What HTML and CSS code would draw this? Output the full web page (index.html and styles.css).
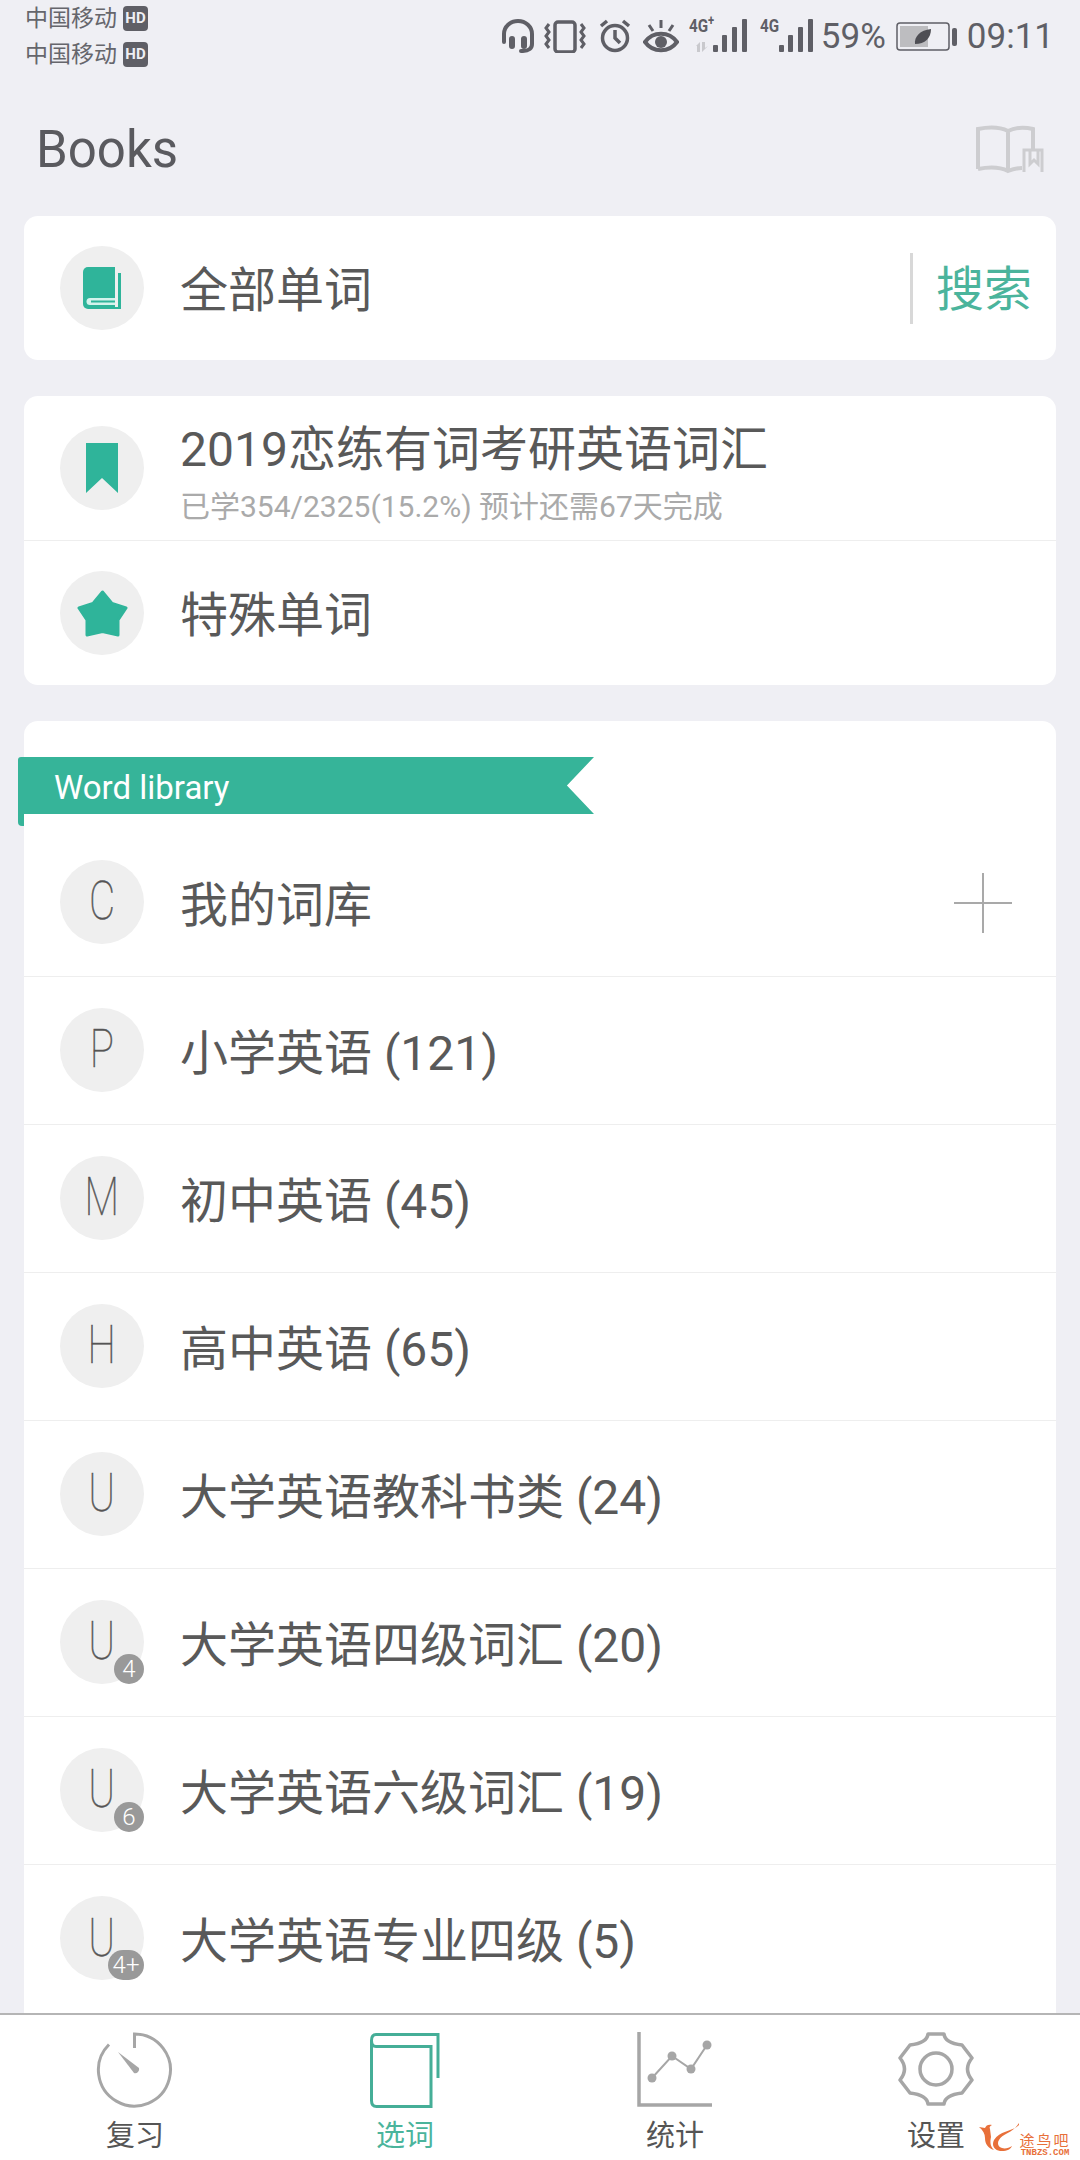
FILE: index.html
```html
<!DOCTYPE html>
<html lang="en">
<head>
  <meta charset="UTF-8">
  <title>Books</title>
  <link rel="stylesheet" href="styles.css">
</head>
<body>
  <div class="phone">
    <div class="statusbar">
      <div class="carriers">
        <div class="carrier">中国移动<span class="hd">HD</span></div>
        <div class="carrier">中国移动<span class="hd">HD</span></div>
      </div>
      <div class="status-right">
        <svg class="st st-head" width="34" height="34" viewBox="0 0 34 34" fill="none" stroke="#5f5f66" stroke-width="4" stroke-linecap="round"><path d="M3 23V15a14 13 0 0 1 28 0v10c0 4-3 7-9 7h-2"/><path d="M11 20v7M23 20v7" stroke-width="6"/></svg>
        <svg class="st st-vib" width="42" height="34" viewBox="0 0 42 34" fill="none" stroke="#5f5f66" stroke-width="3.500"><rect x="11" y="3" width="20" height="30" rx="3"/><path d="M5 5l-3 4 3 4-3 4 3 4-3 4 3 4M37 5l3 4-3 4 3 4-3 4 3 4-3 4" stroke-width="3"/></svg>
        <svg class="st" width="32" height="34" viewBox="0 0 32 34" fill="none" stroke="#5f5f66" stroke-width="3.500"><circle cx="16" cy="19" r="12.500"/><path d="M16 11v8l5 5M2 7l6-5M30 7l-6-5"/></svg>
        <svg class="st st-eye" width="36" height="34" viewBox="0 0 36 34" fill="none" stroke="#5f5f66" stroke-width="4"><path d="M2 23c8-11 24-11 32 0-8 11-24 11-32 0z"/><circle cx="18" cy="23" r="6" fill="#5f5f66" stroke="none"/><path d="M18 1v8M6 6l4 6M30 6l-4 6" stroke-width="3"/></svg>
        <div class="signal sig-a">
          <span class="sig-label">4G<sup>+</sup></span>
          <svg width="60" height="34" viewBox="0 0 60 34" fill="#5f5f66"><path d="M7 27l4-4v10H8v-6zM13 33V23h3v6l3-2z" fill="#c9c9cd"/><rect x="24" y="26" width="5" height="7" rx="1"/><rect x="33" y="16" width="5" height="17" rx="1"/><rect x="43" y="8" width="5" height="25" rx="1"/><rect x="53" y="0" width="5" height="33" rx="1"/></svg>
        </div>
        <div class="signal sig-b">
          <span class="sig-label">4G</span>
          <svg width="53" height="34" viewBox="0 0 53 34" fill="#5f5f66"><rect x="19" y="26" width="5" height="7" rx="1"/><rect x="28" y="16" width="5" height="17" rx="1"/><rect x="38" y="8" width="5" height="25" rx="1"/><rect x="48" y="0" width="5" height="33" rx="1"/></svg>
        </div>
        <span class="pct">59%</span>
        <svg class="batt" width="61" height="32" viewBox="0 0 61 32" fill="none"><rect x="1" y="2" width="52" height="27" rx="3" stroke="#5f5f66" stroke-width="1.500"/><rect x="4" y="5" width="28" height="21" fill="#bdbdc0"/><path d="M19 23c-1-7 5-14 16-15 0 9-6 15-16 15z" fill="#4e4e54"/><rect x="56" y="7" width="5" height="18" rx="2" fill="#5f5f66"/></svg>
        <span class="time">09:11</span>
      </div>
    </div>

    <div class="header">
      <h1 class="title">Books</h1>
      <svg class="shelf" width="68" height="50" viewBox="0 0 68 50" fill="none" stroke="#cdcdd0" stroke-width="4"><path d="M2 44V4c10-2 22-2 30 2 8-4 17-4 25-2v20M2 44c10-2 22-2 30 2 5-2 10-3 14-3M32 6v40"/><path d="M48 47V25h18v22M54 25v14l4-4 4 4V25" stroke-width="3"/></svg>
    </div>

    <div class="content">
      <div class="card">
        <div class="row row-top">
          <div class="badge-wrap">
            <svg width="38" height="42" viewBox="0 0 38 42"><path d="M5 0h27v42H5a5 5 0 0 1-5-5V5a5 5 0 0 1 5-5z" fill="#2fb49a"/><path d="M7 31h25v7H7a3.500 3.500 0 0 1 0-7z" fill="#d4f3ec"/><rect x="8" y="33.500" width="24" height="2" fill="#2fb49a"/><path d="M35 6h3v36h-6v-2h3z" fill="#2fb49a"/></svg>
          </div>
          <div class="label">全部单词</div>
          <div class="search">搜索</div>
        </div>
      </div>

      <div class="card">
        <div class="row row-book">
          <div class="badge-wrap">
            <svg width="32" height="50" viewBox="0 0 32 50"><path d="M0 0h32v50L16 35 0 50z" fill="#2fb49a"/></svg>
          </div>
          <div class="label-stack">
            <div class="label">2019恋练有词考研英语词汇</div>
            <div class="sub">已学354/2325(15.2%) 预计还需67天完成</div>
          </div>
        </div>
        <div class="row row-star">
          <div class="badge-wrap">
            <svg width="51" height="47" viewBox="0 0 51 47"><path d="M25.500 2L35 13.500 49 18 41 30V45L25.500 41.500 10 45V30L2 18 16 13.500z" fill="#2fb49a" stroke="#2fb49a" stroke-width="3" stroke-linejoin="round"/></svg>
          </div>
          <div class="label">特殊单词</div>
        </div>
      </div>

      <div class="card card-lib">
        <div class="lib-head">
          <div class="ribbon">Word library</div>
        </div>
        <div class="row">
          <div class="badge-wrap"><span class="letter">C</span></div>
          <div class="label">我的词库</div>
          <svg class="plus" width="58" height="60" viewBox="0 0 58 60" stroke="#a9a9a9" stroke-width="2"><path d="M29 0v60M0 30h58"/></svg>
        </div>
        <div class="row">
          <div class="badge-wrap"><span class="letter">P</span></div>
          <div class="label">小学英语 (121)</div>
        </div>
        <div class="row">
          <div class="badge-wrap"><span class="letter">M</span></div>
          <div class="label">初中英语 (45)</div>
        </div>
        <div class="row">
          <div class="badge-wrap"><span class="letter">H</span></div>
          <div class="label">高中英语 (65)</div>
        </div>
        <div class="row">
          <div class="badge-wrap"><span class="letter">U</span></div>
          <div class="label">大学英语教科书类 (24)</div>
        </div>
        <div class="row">
          <div class="badge-wrap"><span class="letter">U</span><span class="level">4</span></div>
          <div class="label">大学英语四级词汇 (20)</div>
        </div>
        <div class="row">
          <div class="badge-wrap"><span class="letter">U</span><span class="level">6</span></div>
          <div class="label">大学英语六级词汇 (19)</div>
        </div>
        <div class="row">
          <div class="badge-wrap"><span class="letter">U</span><span class="level wide">4+</span></div>
          <div class="label">大学英语专业四级 (5)</div>
        </div>
      </div>
    </div>

    <div class="tabbar">
      <div class="tab">
        <svg width="78" height="78" viewBox="0 0 78 78" fill="none" stroke="#a6a6a6" stroke-width="3"><path d="M38.500 16V2A36 36 0 1 1 13 12.500"/><path d="M22 20L43 36a4 4 0 0 1-5 5z" fill="#a6a6a6" stroke="none"/></svg>
        <span>复习</span>
      </div>
      <div class="tab active">
        <svg width="72" height="78" viewBox="0 0 72 78" fill="none" stroke="#45ae97" stroke-width="3"><path d="M69 46V2.500H7C4 2.500 2.500 5 2.500 8.500v60c0 4 2 6 5 6H62V14.500H7C4 14.500 2.500 12 2.500 8.500"/></svg>
        <span>选词</span>
      </div>
      <div class="tab">
        <svg width="78" height="78" viewBox="0 0 78 78" fill="none" stroke="#a6a6a6"><path d="M3 0v73h73" stroke-width="3.500"/><path d="M16 46L36 24L55 37L71 13" stroke-width="2"/><g fill="#a6a6a6" stroke="none"><circle cx="16" cy="46" r="4.500"/><circle cx="36" cy="24" r="4.500"/><circle cx="55" cy="37" r="4.500"/><circle cx="71" cy="13" r="4.500"/></g></svg>
        <span>统计</span>
      </div>
      <div class="tab">
        <svg width="76" height="78" viewBox="0 0 76 78" fill="none" stroke="#a6a6a6" stroke-width="3.500" stroke-linejoin="round"><path d="M30 2H46Q47 11 64 13L74 26Q65 37 74 48L64 61Q47 63 46 72H30Q29 63 12 61L2 48Q11 37 2 26L12 13Q29 11 30 2Z"/><circle cx="38" cy="37" r="16"/></svg>
        <span>设置</span>
      </div>
    </div>

    <div class="watermark">
      <svg class="wm-logo" width="42" height="30" viewBox="0 0 42 30" fill="#e8703a"><path d="M41 2C34 9 22 7 16 17c-3 6 1 11 8 11 5 0 9-2 10-5-3 2-7 3-10 2-4-1-5-5-3-8 3-6 14-7 20-17z"/><path d="M1 4l6 1c1-3 4-4 7-3-2 1-3 2-2 4l1 8c-1 5-1 9 3 13-6-2-9-6-9-12 0-4-2-8-6-11z"/></svg>
      <div class="wm-text">
        <span class="wm-cn">途鸟吧</span>
        <span class="wm-en">TNBZS.COM</span>
      </div>
    </div>
  </div>
</body>
</html>
```

FILE: styles.css
```css
* {
  box-sizing: border-box;
}

body {
  margin: 0;
  background: #efeff4;
  font-family: Roboto, "Noto Sans CJK SC", sans-serif;
  color: #555;
}

.phone {
  position: relative;
  width: 1080px;
  height: 2160px;
  display: flex;
  flex-direction: column;
  overflow: hidden;
  background: #efeff4;
}

/* status bar */
.statusbar {
  height: 72px;
  padding: 0 26px 0 25px;
  display: flex;
  justify-content: space-between;
}

.carrier {
  height: 36px;
  display: flex;
  align-items: center;
  font-size: 23px;
  color: #66666c;
  line-height: 25px;
}

.hd {
  width: 25px;
  height: 25px;
  margin-left: 6px;
  border-radius: 4px;
  background: #5f5f66;
  color: #efeff4;
  font-size: 15px;
  font-weight: 700;
  text-align: center;
}

.status-right {
  padding-top: 19px;
  display: flex;
  align-items: flex-start;
  color: #5f5f66;
}

.st {
  margin-right: 12px;
}

.st-head {
  margin-right: 9px;
}

.st-vib {
  margin-right: 13px;
}

.st-eye {
  margin-right: 10px;
}

.signal {
  position: relative;
}

.sig-a {
  width: 60px;
  margin-right: 11px;
}

.sig-b {
  width: 53px;
  margin-right: 8px;
}

.sig-label {
  position: absolute;
  left: 0;
  top: -2px;
  font-size: 19px;
  font-weight: 700;
  line-height: 18px;
  white-space: nowrap;
  transform: scaleX(0.8);
  transform-origin: left top;
}

.sig-label sup {
  font-size: 14px;
  line-height: 0;
}

.pct {
  margin: -2px 10px 0 0;
  font-size: 35px;
  line-height: 40px;
}

.batt {
  margin: 2px 10px 0 0;
}

.time {
  margin-top: -2px;
  font-size: 35px;
  line-height: 40px;
}

/* title row */
.header {
  height: 144px;
  padding: 0 36px 0 36px;
  display: flex;
  justify-content: space-between;
  align-items: flex-start;
}

.title {
  margin: 48px 0 0;
  font-size: 51px;
  font-weight: 400;
  line-height: 60px;
  color: #5a5a5f;
}

.shelf {
  margin-top: 53px;
}

/* cards */
.content {
  flex: 1;
  min-height: 0;
  padding: 0 24px;
  overflow: hidden;
}

.card {
  background: #fff;
  border-radius: 14px;
  margin-bottom: 36px;
}

.row {
  height: 148px;
  padding: 0 32px 0 36px;
  display: flex;
  align-items: center;
  border-bottom: 1px solid #eeeeee;
}

.row:last-child {
  border-bottom: none;
}

.row-top {
  height: 144px;
}

.row-book {
  height: 145px;
}

.row-star {
  height: 144px;
}

.badge-wrap {
  position: relative;
  flex: none;
  width: 84px;
  height: 84px;
  margin-right: 36px;
  border-radius: 50%;
  background: #efefef;
  display: flex;
  align-items: center;
  justify-content: center;
}

.card-lib .badge-wrap {
  margin-top: -2px;
}

.label {
  flex: 1;
  padding-top: 6px;
  font-size: 48px;
  line-height: 60px;
  color: #595959;
  white-space: nowrap;
}

.label-stack {
  flex: 1;
  margin-top: 4px;
}

.sub {
  margin-top: 8px;
  font-size: 30px;
  line-height: 38px;
  color: #aaa;
}

.search {
  width: 120px;
  height: 71px;
  border-left: 3px solid #d8d8d8;
  padding-left: 23px;
  margin-right: -6px;
  font-size: 48px;
  line-height: 74px;
  color: #4bb49c;
  white-space: nowrap;
}

.card-lib {
  margin-bottom: 0;
  border-radius: 14px 14px 0 0;
}

.lib-head {
  position: relative;
  height: 108px;
  padding-top: 36px;
}

/* little fold under the ribbon's left end */
.lib-head::before {
  content: "";
  position: absolute;
  left: -6px;
  top: 90px;
  width: 6px;
  height: 15px;
  background: #36b499;
  border-radius: 0 0 0 4px;
}

.ribbon {
  width: 576px;
  height: 57px;
  margin-left: -6px;
  padding-left: 36px;
  background: #36b499;
  color: #fff;
  font-size: 33px;
  line-height: 62px;
  border-radius: 3px 0 0 0;
  clip-path: polygon(0 0, 100% 0, 95.300% 50%, 100% 100%, 0 100%);
}

.letter {
  font-size: 53px;
  font-weight: 100;
  line-height: 1;
  color: #555;
  -webkit-text-stroke: 0.5px #555;
  transform: scaleX(0.76);
}

.level {
  position: absolute;
  right: 0;
  bottom: 0;
  width: 30px;
  height: 30px;
  border-radius: 15px;
  background: #999;
  color: #fff;
  font-size: 24px;
  font-weight: 300;
  line-height: 30px;
  text-align: center;
}

.level.wide {
  width: 36px;
}

.plus {
  margin-right: 12px;
}

/* bottom tabs */
.tabbar {
  height: 147px;
  flex: none;
  padding-top: 17px;
  border-top: 2px solid #b5b5b5;
  background: #fff;
  display: grid;
  grid-template-columns: repeat(4, 270px);
}

.tab {
  display: flex;
  flex-direction: column;
  align-items: center;
  font-size: 29px;
  line-height: 40px;
  color: #555;
}

.tab:last-child {
  padding-right: 18px;
}

.tab span {
  margin-top: 6px;
}

.tab.active {
  color: #4bb49c;
}

/* site mark over the corner */
.watermark {
  position: absolute;
  left: 978px;
  top: 2123px;
  display: flex;
  color: #e8703a;
}

.wm-logo {
  flex: none;
}

.wm-text {
  flex: none;
  display: flex;
  flex-direction: column;
  align-items: center;
  width: 50px;
  white-space: nowrap;
}

.wm-cn {
  margin-top: 10px;
  font-size: 15px;
  line-height: 16px;
  letter-spacing: 2px;
}

.wm-en {
  font-family: "Liberation Mono", monospace;
  font-size: 9px;
  font-weight: 700;
  line-height: 8px;
}
```
